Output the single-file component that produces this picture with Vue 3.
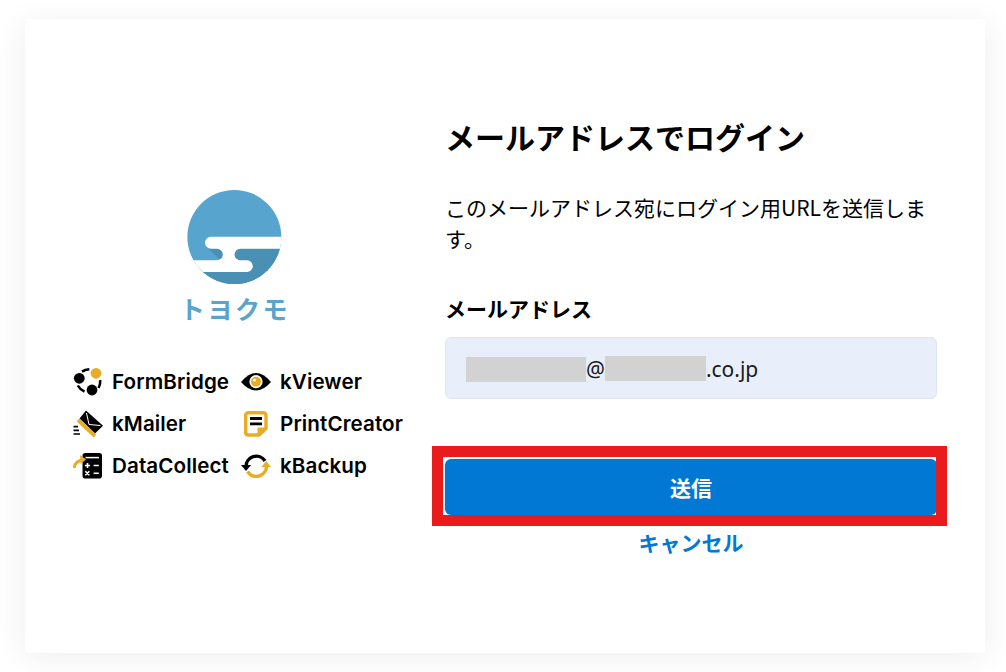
<template>
  <div class="page">
    <main class="card">
      <section class="side">
        <div class="logo">
          <svg class="logo-mark" viewBox="80 58 288 291" width="96" height="97">
            <defs>
              <clipPath id="moon"><circle cx="222" cy="202" r="141" /></clipPath>
            </defs>
            <g clip-path="url(#moon)">
              <rect x="70" y="50" width="310" height="300" fill="#57a5cf" />
              <rect x="200" y="237" width="180" height="120" fill="#4a90b5" />
              <rect x="70" y="300" width="310" height="60" fill="#4a90b5" />
              <path d="M140 232 L180 272 L195 255 L170 232 Z" fill="#4a90b5" />
              <path d="M152 201 H370 V237 H240 A17.5 17.5 0 0 0 240 272 H260 A17.5 17.5 0 0 1 260 307 H60 V272 H170 A17.5 17.5 0 0 0 170 237 H152 A18 18 0 0 1 152 201 Z" fill="#fff" />
            </g>
          </svg>
          <div class="logo-name">トヨクモ</div>
        </div>
        <ul class="brands">
          <li v-for="b in brands" :key="b.name" class="brand">
            <svg viewBox="0 0 32 32" width="32" height="32" v-html="b.icon"></svg>
            <span>{{ b.name }}</span>
          </li>
        </ul>
      </section>

      <section class="form">
        <h1>メールアドレスでログイン</h1>
        <p class="lead">このメールアドレス宛にログイン用URLを送信します。</p>
        <label class="label">メールアドレス</label>
        <div class="input">
          <span class="mask mask-a"></span>
          <span class="mail-part">@</span>
          <span class="mask mask-b"></span>
          <span class="mail-part">.co.jp</span>
        </div>
        <div class="submit-wrap">
          <button class="submit" type="button">送信</button>
        </div>
        <a class="cancel" href="#" @click.prevent>キャンセル</a>
      </section>
    </main>
  </div>
</template>

<script setup>
const gold = '#e8ad25'

const brands = [
  {
    name: 'FormBridge',
    icon: `<circle cx="6.3" cy="12.3" r="5.4" fill="#000"/><circle cx="23" cy="7.3" r="5.4" fill="${gold}"/><circle cx="19" cy="24" r="5.4" fill="#000"/>
      <path d="M9 5.6 Q12 3.6 16.3 3.2 M4.8 19.5 Q7 23.6 11.5 25.6 M27.2 14 Q27.6 18 25.6 22" stroke="#000" stroke-width="2.6" fill="none"/>`
  },
  {
    name: 'kViewer',
    icon: `<path d="M0 16 Q15 -2 30 16 Q15 33 0 16 Z" fill="#000"/><circle cx="15" cy="15.7" r="6.6" fill="#fff"/><circle cx="15" cy="15.7" r="5" fill="${gold}"/><circle cx="13.5" cy="14.2" r="1.4" fill="#fff"/>`
  },
  {
    name: 'kMailer',
    icon: `<path d="M13 2.5 L30 17.7 L22 25.5 L6.5 10.5 Z" fill="#000"/><path d="M13.5 5 L16 16.5 L27.5 17.5" stroke="#fff" stroke-width="1" fill="none"/><path d="M5 12 L22 28" stroke="${gold}" stroke-width="3.8"/>
      <path d="M0.5 18.7 H5 M0.5 22.3 H6 M0.5 26 H7" stroke="#000" stroke-width="1.7"/>`
  },
  {
    name: 'PrintCreator',
    icon: `<path d="M7.5 4.7 H22 Q25 4.7 25 7.7 V20.5 L18 27 H7.5 Q4.7 27 4.7 24.2 V7.5 Q4.7 4.7 7.5 4.7 Z" fill="#fff" stroke="${gold}" stroke-width="3.4" stroke-linejoin="round"/><path d="M16.5 27.5 V19.5 H26 Z" fill="${gold}"/>
      <path d="M9 10.5 H21 M9 15.8 H21" stroke="#000" stroke-width="2.8"/>`
  },
  {
    name: 'DataCollect',
    icon: `<rect x="9.5" y="3" width="19.5" height="25.5" rx="2.8" fill="#000"/><path d="M12.5 7.6 H26" stroke="#fff" stroke-width="1.5"/>
      <path d="M11.9 15.5 H17.1 M14.5 12.9 V18.1 M20.6 15.5 H25.8 M12.3 21.2 L16.3 25.2 M16.3 21.2 L12.3 25.2 M20.6 23.2 H25.8" stroke="#fff" stroke-width="1.6"/>
      <path d="M1 18 Q2 11.5 9 10" stroke="${gold}" stroke-width="3" fill="none"/><path d="M7 5 L13 9.5 L7.5 14 Z" fill="${gold}"/>`
  },
  {
    name: 'kBackup',
    icon: `<path d="M5 17 A10.3 10.3 0 0 1 24 11" stroke="#000" stroke-width="3.4" fill="none"/><path d="M0 15 H10 L5 21 Z" fill="#000"/>
      <path d="M25.5 15 A10.3 10.3 0 0 1 6.5 21.5" stroke="${gold}" stroke-width="3.4" fill="none"/><path d="M20.5 17 H30 L25.2 11 Z" fill="${gold}"/>`
  }
]
</script>

<style>
html,
body {
  background: #fff;
}
</style>

<style scoped>
.page {
  width: 1006px;
  height: 672px;
  padding: 19px 21px 19px 25px;
  box-sizing: border-box;
  overflow: hidden;
  font-family: "Noto Sans CJK JP", "Noto Sans", sans-serif;
  color: #000;
}

.card {
  height: 634px;
  display: flex;
  align-items: center;
  background: #fff;
  border-radius: 3px;
  box-shadow: 0 4px 32px rgba(0, 0, 0, 0.07);
}

.side {
  width: 420px;
  padding: 3px 0 0 48px;
  box-sizing: border-box;
}

.logo {
  width: 324px;
  display: flex;
  flex-direction: column;
  align-items: center;
}

.logo-mark {
  display: block;
}

.logo-name {
  margin-top: 7px;
  font-size: 25px;
  line-height: 30px;
  font-weight: 700;
  letter-spacing: 2.6px;
  color: #57a5cf;
}

.brands {
  list-style: none;
  margin: 38px 0 0;
  padding: 0;
  display: grid;
  grid-template-columns: 168px 168px;
  grid-auto-rows: 42px;
}

.brand {
  display: flex;
  align-items: center;
  gap: 7px;
  font-family: Inter, "Noto Sans", sans-serif;
  font-size: 20.6px;
  font-weight: 600;
  letter-spacing: 0.1px;
  white-space: nowrap;
}

.brand svg {
  flex: none;
}

.form {
  width: 492px;
  padding: 5px 0 3px;
}

h1 {
  margin: 0;
  font-size: 30px;
  line-height: 40px;
  font-weight: 700;
}

.lead {
  margin: 36px 0 0;
  font-size: 21px;
  line-height: 31px;
}

.label {
  display: block;
  margin-top: 39px;
  font-size: 21px;
  line-height: 30px;
  font-weight: 700;
}

.input {
  margin-top: 14px;
  height: 62px;
  box-sizing: border-box;
  padding: 0 20px;
  display: flex;
  align-items: center;
  background: #e8effb;
  border: 1px solid #dfe5ee;
  border-radius: 6px;
  font-family: "Noto Sans", sans-serif;
  font-size: 21px;
}

.mail-part {
  margin-top: 2px;
  color: #1a1a1a;
}

.mask {
  display: block;
  height: 25px;
  background: #d2d2d2;
}

.mask-a {
  width: 120px;
  margin-top: 2px;
}

.mask-b {
  width: 101px;
}

.submit-wrap {
  position: relative;
  margin-top: 60px;
}

.submit-wrap::after {
  content: "";
  position: absolute;
  left: -13px;
  right: -10px;
  top: -13px;
  bottom: -11px;
  border: 11px solid #e81c1c;
  pointer-events: none;
}

.submit {
  display: block;
  width: 100%;
  height: 56px;
  border: 0;
  border-radius: 6px;
  background: #0078d4;
  color: #fff;
  font-family: inherit;
  font-size: 21px;
  font-weight: 700;
}

.cancel {
  display: block;
  margin-top: 11px;
  text-align: center;
  font-size: 21px;
  line-height: 32px;
  font-weight: 700;
  color: #0078d4;
  text-decoration: none;
}
</style>
